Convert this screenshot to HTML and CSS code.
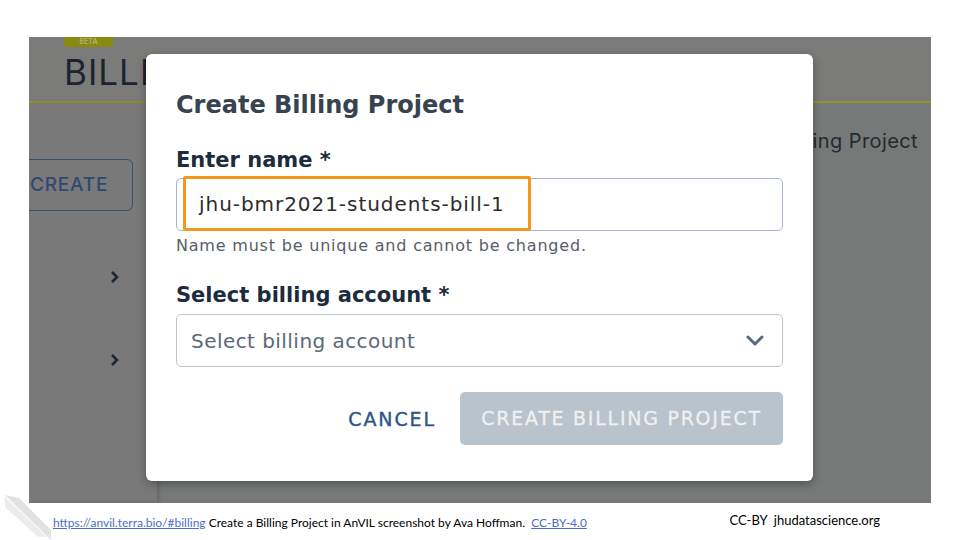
FILE: index.html
```html
<!DOCTYPE html>
<html>
<head>
<meta charset="utf-8">
<link rel="stylesheet" href="styles.css">
</head>
<body>
<div class="slide">
  <div class="shot">
    <div class="app-header">
      <div class="beta">BETA</div>
      <div class="page-title">BILLING</div>
    </div>
    <div class="app-body">
      <div class="sidebar">
        <div class="create-btn">CREATE</div>
        <div class="side-list">
          <div class="side-row"><svg class="chev" width="10" height="14" viewBox="0 0 10 14"><path d="M2 2 L7 7 L2 12" fill="none" stroke="#1e2630" stroke-width="2.6"/></svg></div>
          <div class="side-row"><svg class="chev" width="10" height="14" viewBox="0 0 10 14"><path d="M2 2 L7 7 L2 12" fill="none" stroke="#1e2630" stroke-width="2.6"/></svg></div>
        </div>
      </div>
      <div class="content">
        <div class="content-head">Create Billing Project</div>
      </div>
    </div>
    <div class="modal">
      <h1 class="modal-title">Create Billing Project</h1>
      <label class="field-label">Enter name *</label>
      <div class="input-wrap">
        <div class="text-input">jhu-bmr2021-students-bill-1</div>
        <div class="highlight"></div>
      </div>
      <div class="hint">Name must be unique and cannot be changed.</div>
      <label class="field-label second">Select billing account *</label>
      <div class="select">
        <span class="placeholder">Select billing account</span>
        <svg class="caret" width="18" height="12" viewBox="0 0 18 12"><path d="M2 2 L9 9 L16 2" fill="none" stroke="#5b6b7c" stroke-width="3" stroke-linecap="round" stroke-linejoin="round"/></svg>
      </div>
      <div class="actions">
        <span class="cancel">CANCEL</span>
        <span class="primary">CREATE BILLING PROJECT</span>
      </div>
    </div>
  </div>
  <div class="footer">
    <svg class="logo" width="50" height="45" viewBox="0 0 50 45"><polygon points="0,0 14,3 46,35 46,45" fill="#e2e2e2"/><polygon points="0,2 0,12 33,42 42,42" fill="#ececec"/></svg>
    <div class="credit"><a class="link" href="#">https://anvil.terra.bio/#billing</a> Create a Billing Project in AnVIL screenshot by Ava Hoffman. &nbsp;<a class="link" href="#">CC-BY-4.0</a></div>
    <div class="license">CC-BY &nbsp;jhudatascience.org</div>
  </div>
</div>
</body>
</html>
```
FILE: styles.css
```css
* { box-sizing: border-box; }
html, body { margin: 0; padding: 0; background: #fff; }
.slide { width: 960px; height: 540px; overflow: hidden; position: relative; padding-top: 37px; }
.shot {
  position: relative;
  margin-left: 29px;
  width: 902px;
  height: 466px;
  overflow: hidden;
  background: #777878;
  font-family: Inter, "DejaVu Sans", sans-serif;
}
.app-header {
  height: 66px;
  background: #7b7b7a;
  border-bottom: 2px solid #94942e;
  padding-left: 35px;
}
.beta {
  width: 49px;
  height: 10px;
  background: #8a8a10;
  color: #b4b478;
  font-size: 7px;
  font-weight: 600;
  line-height: 10px;
  text-align: center;
  border-radius: 0 0 3px 3px;
  overflow: hidden;
}
.page-title {
  margin-top: 4px;
  font-size: 35px;
  color: #1b2431;
  letter-spacing: 1px;
  line-height: 42px;
}
.app-body { display: flex; height: 398px; }
.sidebar {
  width: 128px;
  background: #797979;
  box-shadow: 2px 0 4px rgba(0,0,0,0.15);
  position: relative;
  padding-top: 56px;
}
.create-btn {
  margin-left: -20px;
  width: 124px;
  height: 52px;
  border: 1px solid #3b506a;
  border-radius: 6px;
  color: #2f4a6e;
  font-size: 19px;
  font-weight: 500;
  line-height: 50px;
  padding-left: 20px;
  letter-spacing: 0.8px;
}
.side-list { margin-top: 24px; }
.side-row { height: 83px; display: flex; align-items: center; justify-content: flex-end; padding-right: 37px; }
.content { flex: 1; position: relative; }
.content-head {
  text-align: right;
  padding-right: 13px;
  padding-top: 26px;
  font-size: 20px;
  color: #262a30;
  letter-spacing: 0.4px;
}
.modal {
  position: absolute;
  left: 117px;
  top: 17px;
  width: 667px;
  height: 427px;
  background: #fff;
  border-radius: 6px;
  box-shadow: 0 3px 10px rgba(0,0,0,0.3);
  padding: 36px 30px 0;
  font-family: "DejaVu Sans", sans-serif;
}
.modal-title {
  margin: 0;
  font-size: 24px;
  font-weight: 700;
  color: #38434f;
  line-height: 30px;
}
.field-label {
  display: block;
  margin-top: 27px;
  font-size: 21px;
  font-weight: 700;
  color: #1c2b3d;
  line-height: 26px;
}
.field-label.second { margin-top: 27px; }
.input-wrap { position: relative; margin-top: 5px; }
.text-input {
  height: 53px;
  border: 1px solid #a8b5cf;
  border-radius: 5px;
  padding-left: 22px;
  font-size: 20px;
  line-height: 51px;
  color: #2d2d2d;
  letter-spacing: 0.95px;
}
.highlight {
  position: absolute;
  left: 7px;
  top: -2px;
  width: 348px;
  height: 55px;
  border: 3px solid #f7961c;
  border-radius: 2px;
}
.hint {
  margin-top: 5px;
  font-size: 16px;
  line-height: 19px;
  color: #575e66;
  letter-spacing: 0.8px;
}
.select {
  margin-top: 6px;
  height: 53px;
  border: 1px solid #bfc6ce;
  border-radius: 5px;
  display: flex;
  align-items: center;
  justify-content: space-between;
  padding: 0 18px 0 14px;
  font-size: 20px;
  color: #5b6977;
  letter-spacing: 0.45px;
}
.actions {
  margin-top: 25px;
  display: flex;
  justify-content: flex-end;
  align-items: center;
}
.cancel {
  font-size: 19px;
  color: #2d5689;
  margin-right: 24px;
  letter-spacing: 1.9px;
  -webkit-text-stroke: 0.4px #2d5689;
}
.primary {
  width: 323px;
  height: 53px;
  background: #b9c3cb;
  color: #eef1f3;
  border-radius: 5px;
  font-size: 19px;
  line-height: 53px;
  text-align: center;
  letter-spacing: 1.75px;
  -webkit-text-stroke: 0.3px #eef1f3;
}
.footer {
  position: relative;
  height: 37px;
  font-family: Lato, sans-serif;
  font-size: 12px;
  color: #000;
  display: flex;
  align-items: center;
  padding-left: 53px;
}
.logo { position: absolute; left: 5px; top: -8px; }
.credit { margin-top: 2px; }
.link { color: #4a6fc9; text-decoration: underline; }
.license { margin-left: auto; margin-right: 80px; font-size: 13px; margin-top: -3px; }
```
